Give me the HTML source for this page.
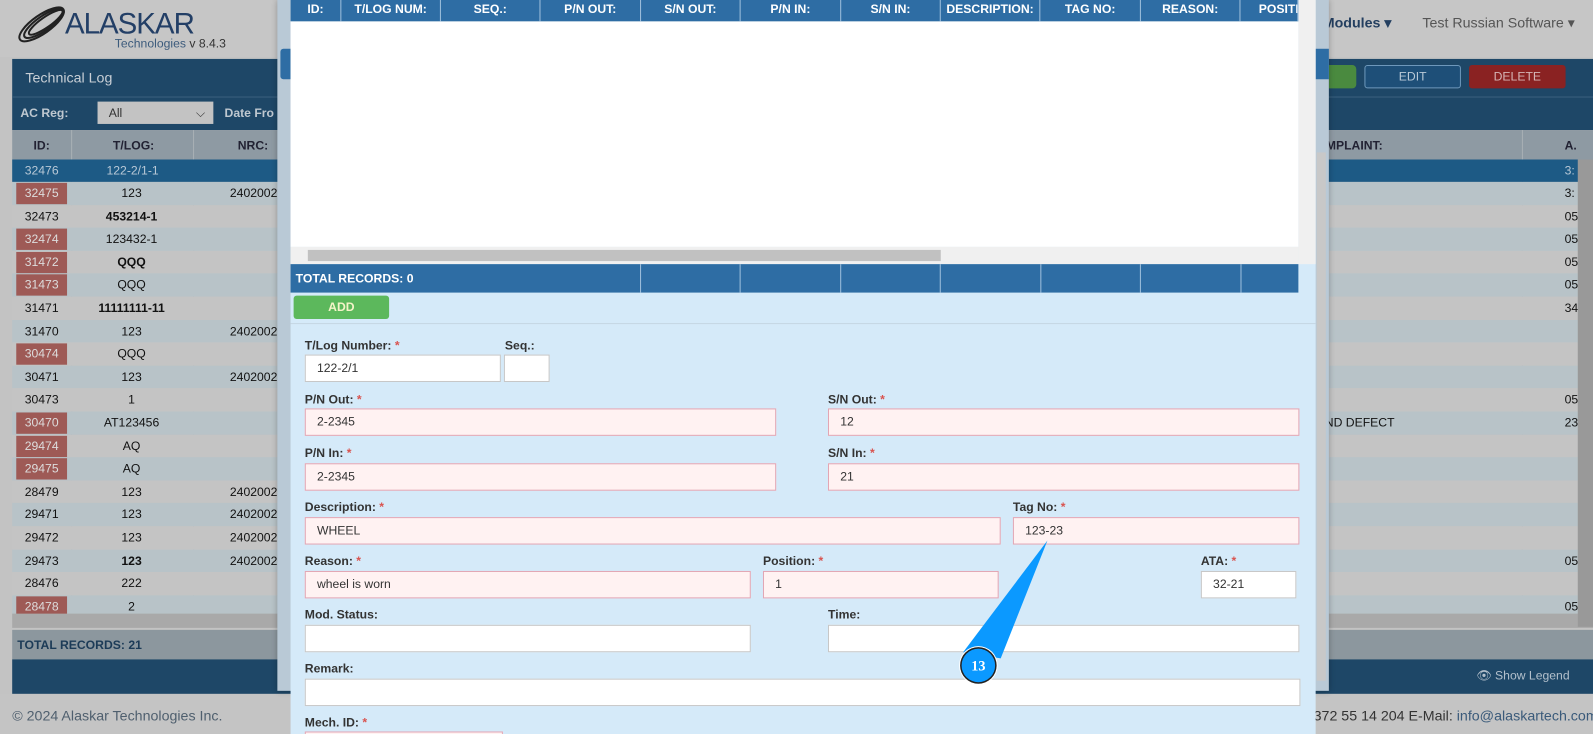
<!DOCTYPE html>
<html><head><meta charset="utf-8"><style>
*{box-sizing:border-box;margin:0;padding:0}
html,body{width:1593px;height:734px;overflow:hidden;background:#c3c3c3}
body{font-family:"Liberation Sans",Arial,sans-serif;font-size:12px;position:relative}
#w{position:absolute;left:0;top:0;width:1568px;height:723px;transform:scale(1.01595);transform-origin:0 0;overflow:hidden}
.a{position:absolute;white-space:nowrap}
.row{position:absolute;left:12px;width:1556px;height:23px;line-height:23px;color:#111}
.row span{position:absolute;text-align:center}
.id{left:0;width:58px}
.tl{left:58px;width:119px}
.nrc{left:177px;width:84px;text-align:right!important}
.red{background:#9e5a56;color:#ddd;left:4px!important;width:50px!important;top:1px;height:21px;line-height:21px}
.b{font-weight:bold}
.lbl{position:absolute;font-weight:bold;font-size:12px;color:#333}
.lbl i{color:#d9534f;font-style:normal}
.in{position:absolute;height:27px;background:#fff;border:1px solid #c7c7c7;padding-left:11px;line-height:25px;font-size:12px;color:#333}
.er{background:#fff2f2;border-color:#e2a6b4}
.th{position:absolute;top:0;height:21px;line-height:19px;color:#fff;font-weight:bold;font-size:12px;text-align:center;border-right:1px solid #9fc0dd}
</style></head><body><div id="w">
<div class="a" style="left:0;top:0;width:1568px;height:56px;background:#c6c6c6"></div>
<svg class="a" style="left:14px;top:4px" width="55" height="40" viewBox="0 0 55 40"><g fill="none" stroke="#222" stroke-width="2"><ellipse cx="27" cy="20" rx="26" ry="9" transform="rotate(-35 27 20)"/><ellipse cx="29" cy="19" rx="23" ry="7" transform="rotate(-35 29 19)"/><ellipse cx="31" cy="18" rx="20" ry="5" transform="rotate(-35 31 18)"/></g></svg>
<div class="a" style="left:64px;top:8px;font-size:29px;color:#233f66;letter-spacing:-1px">ALASKAR</div>
<div class="a" style="left:113px;top:36px;font-size:12px;color:#3c5b7c">Technologies <span style="color:#333">v 8.4.3</span></div>
<div class="a" style="left:1302px;top:14px;font-size:14px;font-weight:bold;color:#243f60">Modules ▾</div>
<div class="a" style="left:1400px;top:14px;font-size:14px;color:#555">Test Russian Software ▾</div>
<div class="a" style="left:12px;top:58px;width:1556px;height:37px;background:#1e4767"></div>
<div class="a" style="left:25px;top:68px;font-size:14px;color:#c8cfd6">Technical Log</div>
<div class="a" style="left:1308px;top:64px;width:27px;height:23px;background:#4a8a3f;border-radius:0 4px 4px 0"></div>
<div class="a" style="left:1343px;top:64px;width:95px;height:23px;border:1px solid #6e98bb;border-radius:3px;background:#1e4f78;color:#b9c9d7;text-align:center;line-height:21px">EDIT</div>
<div class="a" style="left:1446px;top:64px;width:95px;height:23px;background:#8a2222;border-radius:3px;color:#d5b5b5;text-align:center;line-height:23px">DELETE</div>
<div class="a" style="left:12px;top:95px;width:1556px;height:33px;background:#1e4767;border-top:1px solid #3b607e"></div>
<div class="a" style="left:20px;top:104px;font-weight:bold;color:#bfc8d0">AC Reg:</div>
<div class="a" style="left:96px;top:100px;width:114px;height:22px;background:#c3c3c3;color:#333;padding-left:11px;line-height:22px">All<span style="position:absolute;right:8px">⌵</span></div>
<div class="a" style="left:221px;top:104px;font-weight:bold;color:#bfc8d0">Date Fro</div>
<div class="a" style="left:12px;top:128px;width:1556px;height:29px;background:#8e9aa3"></div>
<div class="a" style="left:12px;top:136px;width:58px;text-align:center;font-weight:bold;color:#223">ID:</div>
<div class="a" style="left:72px;top:136px;width:119px;text-align:center;font-weight:bold;color:#223">T/LOG:</div>
<div class="a" style="left:234px;top:136px;font-weight:bold;color:#223">NRC:</div>
<div class="a" style="left:1305px;top:136px;font-weight:bold;color:#223">MPLAINT:</div>
<div class="a" style="left:1540px;top:136px;font-weight:bold;color:#223">A.</div>
<div class="a" style="left:70px;top:128px;width:1px;height:470px;background:#a8b0b5"></div>
<div class="a" style="left:190px;top:128px;width:1px;height:470px;background:#a8b0b5"></div>
<div class="a" style="left:1498px;top:128px;width:1px;height:470px;background:#a8b0b5"></div>
<div id="rows"></div>
<div class="a" style="left:12px;top:157px;width:1556px;height:22px;background:#1d5a85"></div>
<div class="a" style="left:12px;top:161px;width:58px;text-align:center;color:#b8c8d6">32476</div>
<div class="a" style="left:70px;top:161px;width:121px;text-align:center;color:#b8c8d6">122-2/1-1</div>
<div class="a" style="left:1540px;top:161px;color:#b8c8d6">3:</div>
<div class="a" style="left:12px;top:604px;width:1556px;height:14px;background:#a9a9a9"></div>
<div class="a" style="left:12px;top:620px;width:1556px;height:29px;background:#8c979e"></div>
<div class="a" style="left:17px;top:628px;font-weight:bold;color:#1c3b57">TOTAL RECORDS: 21</div>
<div class="a" style="left:1553px;top:157px;width:15px;height:460px;background:#999"></div>
<div class="a" style="left:12px;top:649px;width:1556px;height:34px;background:#1e4767"></div>
<div class="a" style="left:1453px;top:658px;color:#b3c0cc">👁 Show Legend</div>
<div class="a" style="left:0;top:683px;width:1568px;height:51px;background:#c4c4c4"></div>
<div class="a" style="left:12px;top:696px;font-size:14px;color:#4f5f6e">© 2024 Alaskar Technologies Inc.</div>
<div class="a" style="left:1293px;top:696px;font-size:14px;color:#333">372 55 14 204 E-Mail: <span style="color:#3a5a7a">info@alaskartech.com</span></div>
<div class="a" style="left:273px;top:0;width:1035px;height:680px;background:#b9c9d6;box-shadow:0 0 6px rgba(0,0,0,.3)"></div>
<div class="a" style="left:276px;top:48px;width:12px;height:30px;background:#2e6da4;border-radius:3px 0 0 3px"></div>
<div class="a" style="left:1290px;top:48px;width:18px;height:30px;background:#2e6da4"></div>
<div class="a" style="left:286px;top:0;width:1009px;height:734px;background:#d5eaf9"></div>
<div class="a" style="left:1296px;top:150px;width:9px;height:520px;background:#c8c8c8"></div>
<div class="a" style="left:286px;top:0;width:992px;height:243px;background:#fff"></div>
<div class="a" style="left:1278px;top:0;width:17px;height:260px;background:#f0f0f0"></div>
<div class="a" style="left:286px;top:0;width:992px;height:21px;background:#2e6da4"></div>
<div class="th" style="left:286px;width:50px">ID:</div>
<div class="th" style="left:336px;width:98px">T/LOG NUM:</div>
<div class="th" style="left:434px;width:98px">SEQ.:</div>
<div class="th" style="left:532px;width:99px">P/N OUT:</div>
<div class="th" style="left:631px;width:98px">S/N OUT:</div>
<div class="th" style="left:729px;width:99px">P/N IN:</div>
<div class="th" style="left:828px;width:98px">S/N IN:</div>
<div class="th" style="left:926px;width:98px">DESCRIPTION:</div>
<div class="th" style="left:1024px;width:99px">TAG NO:</div>
<div class="th" style="left:1123px;width:98px">REASON:</div>
<div class="th" style="left:1221px;width:57px;text-align:left;padding-left:18px;overflow:hidden;white-space:nowrap">POSITI</div>
<div class="a" style="left:286px;top:243px;width:992px;height:17px;background:#f0f0f0"></div>
<div class="a" style="left:303px;top:246px;width:623px;height:11px;background:#c1c1c1"></div>
<div class="a" style="left:286px;top:260px;width:992px;height:28px;background:#2e6da4"></div>
<div class="a" style="left:291px;top:267px;font-weight:bold;color:#fff">TOTAL RECORDS: 0</div>
<div class="a" style="left:630px;top:260px;width:1px;height:28px;background:#9fc0dd;box-shadow:98px 0 #9fc0dd,197px 0 #9fc0dd,295px 0 #9fc0dd,394px 0 #9fc0dd,492px 0 #9fc0dd,591px 0 #9fc0dd"></div>
<div class="a" style="left:289px;top:291px;width:94px;height:23px;background:#5cb85c;border-radius:3px;color:#f4f4c8;text-align:center;line-height:22px;font-weight:bold">ADD</div>
<div class="a" style="left:286px;top:318px;width:1009px;height:1px;background:#c5d7e4"></div>
<div class="lbl" style="left:300px;top:333px">T/Log Number: <i>*</i></div>
<div class="lbl" style="left:497px;top:333px">Seq.:</div>
<div class="in" style="left:300px;top:349px;width:193px">122-2/1</div>
<div class="in" style="left:496px;top:349px;width:45px"></div>
<div class="lbl" style="left:300px;top:386px">P/N Out: <i>*</i></div>
<div class="lbl" style="left:815px;top:386px">S/N Out: <i>*</i></div>
<div class="in er" style="left:300px;top:402px;width:464px">2-2345</div>
<div class="in er" style="left:815px;top:402px;width:464px">12</div>
<div class="lbl" style="left:300px;top:439px">P/N In: <i>*</i></div>
<div class="lbl" style="left:815px;top:439px">S/N In: <i>*</i></div>
<div class="in er" style="left:300px;top:456px;width:464px">2-2345</div>
<div class="in er" style="left:815px;top:456px;width:464px">21</div>
<div class="lbl" style="left:300px;top:492px">Description: <i>*</i></div>
<div class="lbl" style="left:997px;top:492px">Tag No: <i>*</i></div>
<div class="in er" style="left:300px;top:509px;width:685px">WHEEL</div>
<div class="in er" style="left:997px;top:509px;width:282px">123-23</div>
<div class="lbl" style="left:300px;top:545px">Reason: <i>*</i></div>
<div class="lbl" style="left:751px;top:545px">Position: <i>*</i></div>
<div class="lbl" style="left:1182px;top:545px">ATA: <i>*</i></div>
<div class="in er" style="left:300px;top:562px;width:439px">wheel is worn</div>
<div class="in er" style="left:751px;top:562px;width:232px">1</div>
<div class="in" style="left:1182px;top:562px;width:94px">32-21</div>
<div class="lbl" style="left:300px;top:598px">Mod. Status:</div>
<div class="lbl" style="left:815px;top:598px">Time:</div>
<div class="in" style="left:300px;top:615px;width:439px"></div>
<div class="in" style="left:815px;top:615px;width:464px"></div>
<div class="lbl" style="left:300px;top:651px">Remark:</div>
<div class="in" style="left:300px;top:668px;width:980px"></div>
<div class="lbl" style="left:300px;top:704px">Mech. ID: <i>*</i></div>
<div class="in er" style="left:300px;top:720px;width:195px"></div>
<svg class="a" style="left:940px;top:520px" width="100" height="160" viewBox="0 0 100 160">
<polygon points="91,12 45,128 8,122" fill="#0b99ff"/>
<circle cx="23" cy="135" r="19" fill="#fff"/><circle cx="23" cy="135" r="18" fill="#222"/><circle cx="23" cy="135" r="16.5" fill="#0b99ff"/>
<text x="23" y="140" text-anchor="middle" font-family="Liberation Serif,serif" font-weight="bold" font-size="14" fill="#fff">13</text>
</svg>
</div>
<script>
var d=[["32475","123","2402002",1,0],["32473","453214-1","",0,1],["32474","123432-1","",1,0],["31472","QQQ","",1,1],["31473","QQQ","",1,0],["31471","11111111-11","",0,1],["31470","123","2402002",0,0],["30474","QQQ","",1,0],["30471","123","2402002",0,0],["30473","1","",0,0],["30470","AT123456","",1,0],["29474","AQ","",1,0],["29475","AQ","",1,0],["28479","123","2402002",0,0],["29471","123","2402002",0,0],["29472","123","2402002",0,0],["29473","123","2402002",0,1],["28476","222","",0,0],["28478","2","",1,0]];
var a=["3:","05","05","05","05","34","","","","05","23","","","","","","05","","05"];
var h="";d.forEach(function(r,i){var t=179+i*22.6;h+='<div class="row" style="top:'+t+'px;background:'+(i%2?'#c4c4c4':'#b8c3c8')+'"><span class="id'+(r[3]?' red':'')+'">'+r[0]+'</span><span class="tl'+(r[4]?' b':'')+'">'+r[1]+'</span><span class="nrc">'+r[2]+'</span><span style="left:1528px">'+a[i]+'</span>'+(i==10?'<span style="left:1292px">ND DEFECT</span>':'')+'</div>';});
document.getElementById("rows").innerHTML=h;
</script>
</body></html>
